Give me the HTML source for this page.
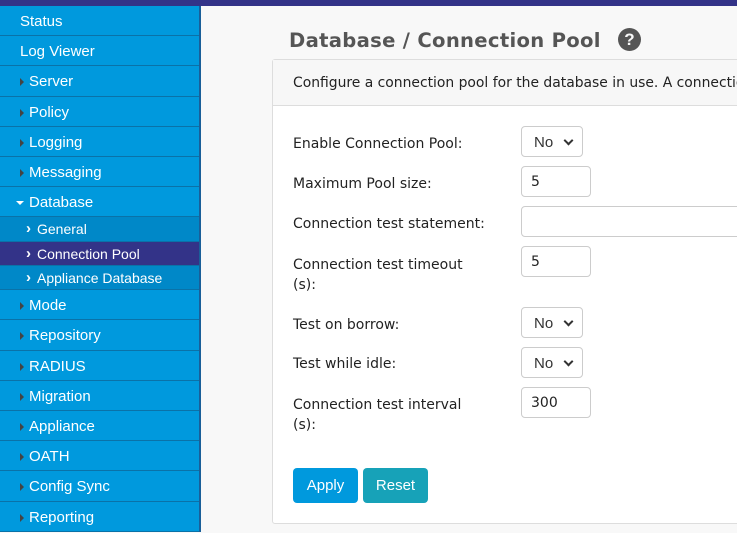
<!DOCTYPE html>
<html><head><style>
*{box-sizing:border-box;margin:0;padding:0}
body{width:737px;height:532px;overflow:hidden;background:#f8f8f8;position:relative;font-family:"DejaVu Sans",Verdana,sans-serif;color:#222}
.top{position:absolute;left:0;top:0;width:737px;height:6px;background:#333388}
.side{position:absolute;left:0;top:6px;width:201px;height:526px;background:#0099dd;border-right:2px solid #1a5f99}
.side div{font-family:"Liberation Sans",Arial,sans-serif;color:#fff;font-size:15px;height:30.2px;line-height:31px;border-bottom:1px solid #0a72a8;padding-left:20px;position:relative}
.side div.c{padding-left:29px}
.side div.c:before{content:"";position:absolute;left:20px;top:12px;border-left:4px solid #444;border-top:4px solid transparent;border-bottom:4px solid transparent}
.side div.o:before{content:"";position:absolute;left:16px;top:14px;border-top:4px solid #fff;border-left:4px solid transparent;border-right:4px solid transparent}
.side div.s{height:24.3px;line-height:24px;font-size:14px;padding-left:37px;background:#0088c8}
.side div.s:before{content:"›";position:absolute;left:26px;top:0px;font-weight:bold;font-size:15px}
.side div.a{background:#333388}
h1{position:absolute;left:289px;top:29px;font-size:19.6px;font-weight:bold;color:#555;letter-spacing:0.3px}
.q{position:absolute;left:618px;top:28px;width:23px;height:23px;border-radius:50%;background:#555;color:#f8f8f8;font-family:"Liberation Sans",sans-serif;font-weight:bold;font-size:17px;text-align:center;line-height:23px}
.card{position:absolute;left:272px;top:59px;width:480px;height:465px;background:#fff;border:1px solid #ddd;border-radius:3px}
.hd{height:46px;background:#f7f7f7;border-bottom:1px solid #ddd;font-size:13.9px;padding:15px 0 0 20px;white-space:nowrap;overflow:hidden}
.l{position:absolute;left:293px;font-size:14px;line-height:20px}
.in{position:absolute;left:521px;height:31px;border:1px solid #ccc;border-radius:4px;background:#fff;font-size:14px;padding:7px 0 0 9px}
.sel{position:absolute;left:521px;width:62px;height:31px;border:1px solid #ccc;border-radius:4px;background:#fff;font-family:"Liberation Sans",sans-serif;font-size:15px;padding:7px 0 0 12px;color:#333}
.sel:after{content:"";position:absolute;right:10px;top:10px;width:5px;height:5px;border-right:2px solid #333;border-bottom:2px solid #333;transform:rotate(45deg)}
.btn{position:absolute;top:468px;height:35px;border-radius:4px;color:#fff;font-family:"Liberation Sans",sans-serif;font-size:15px;text-align:center;line-height:36px}
</style></head><body>
<div class="top"></div>
<div class="side">
<div>Status</div><div>Log Viewer</div><div class="c">Server</div><div class="c">Policy</div><div class="c">Logging</div><div class="c">Messaging</div><div class="o" style="padding-left:29px">Database</div>
<div class="s">General</div><div class="s a">Connection Pool</div><div class="s">Appliance Database</div>
<div class="c">Mode</div><div class="c">Repository</div><div class="c">RADIUS</div><div class="c">Migration</div><div class="c">Appliance</div><div class="c">OATH</div><div class="c">Config Sync</div><div class="c">Reporting</div>
</div>
<h1>Database / Connection Pool</h1><div class="q">?</div>
<div class="card"><div class="hd">Configure a connection pool for the database in use. A connection pool keeps connections open.</div></div>
<div class="l" style="top:134px">Enable Connection Pool:</div><div class="sel" style="top:126px">No</div>
<div class="l" style="top:174px">Maximum Pool size:</div><div class="in" style="top:166px;width:70px">5</div>
<div class="l" style="top:214px">Connection test statement:</div><div class="in" style="top:206px;width:240px"></div>
<div class="l" style="top:255px">Connection test timeout<br>(s):</div><div class="in" style="top:246px;width:70px">5</div>
<div class="l" style="top:315px">Test on borrow:</div><div class="sel" style="top:307px">No</div>
<div class="l" style="top:354px">Test while idle:</div><div class="sel" style="top:347px">No</div>
<div class="l" style="top:395px">Connection test interval<br>(s):</div><div class="in" style="top:387px;width:70px">300</div>
<div class="btn" style="left:293px;width:65px;background:#0099dd">Apply</div>
<div class="btn" style="left:363px;width:65px;background:#17a2b8">Reset</div>
</body></html>
